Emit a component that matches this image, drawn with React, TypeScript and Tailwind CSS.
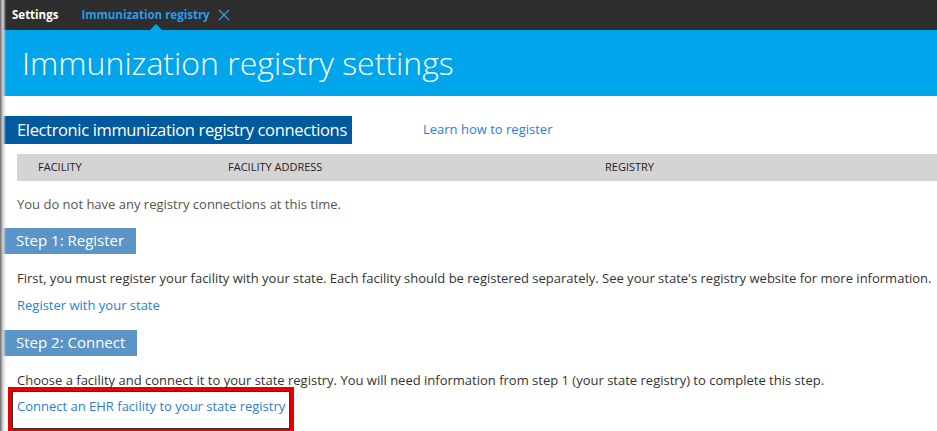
// Immunization registry settings page

import React from "react";

const font = { fontFamily: '"Open Sans", "Noto Sans", sans-serif' };

const StepHeader: React.FC<{ label: string }> = ({ label }) => (
  <div className="inline-flex h-[26px] items-center bg-[#5b94c6] pl-[16px] pr-[12px] text-[15px] text-white">
    {label}
  </div>
);

const App: React.FC = () => {
  return (
    <div className="relative h-[431px] w-[937px] overflow-hidden bg-white" style={font}>
      {/* left edge shadow */}
      <div className="absolute left-0 top-0 z-10 h-full w-[6px] bg-gradient-to-r from-[#6b6b6b] via-[#d8d8d8] to-transparent" />

      {/* Tabs */}
      <header className="flex h-[30px] items-center bg-[#2e2e2e] pl-[12px] text-[11.5px] font-bold">
        <span className="text-white">Settings</span>
        <div className="relative ml-[23px] flex h-full items-center">
          <span className="text-[#2d9be6]">Immunization registry</span>
          <svg className="ml-[8px]" width="12" height="12" viewBox="0 0 12 12">
            <path d="M1 1 L11 11 M11 1 L1 11" stroke="#2d9be6" strokeWidth="1.3" fill="none" />
          </svg>
          <div className="absolute bottom-0 left-[69px] h-0 w-0 border-x-[6px] border-b-[6px] border-x-transparent border-b-[#00a5ec]" />
        </div>
      </header>

      {/* Banner */}
      <div className="flex h-[66px] items-center bg-[#00a5ec] pl-[22px]">
        <h1 className="whitespace-nowrap text-[32px] font-light leading-none text-white">
          Immunization registry settings
        </h1>
      </div>

      <main className="pt-[20px]">
        <div className="flex items-center">
          <div className="flex h-[28px] w-[352px] items-center whitespace-nowrap bg-[#005a9e] pl-[17px] text-[16.5px] tracking-[-0.35px] text-white">
            Electronic immunization registry connections
          </div>
          <a href="#" className="ml-[71px] whitespace-nowrap text-[13px] text-[#2a7fd4]">
            Learn how to register
          </a>
        </div>

        <div className="ml-[17px] mt-[10px] flex h-[27px] items-center bg-[#d4d4d4] text-[11px] text-[#2a1a2a]">
          <span className="ml-[21px] w-[190px]">FACILITY</span>
          <span className="w-[377px]">FACILITY ADDRESS</span>
          <span>REGISTRY</span>
        </div>

        <p className="ml-[17px] mt-[14px] whitespace-nowrap text-[13px] text-[#555]">
          You do not have any registry connections at this time.
        </p>

        <div className="mt-[13px]">
          <StepHeader label="Step 1: Register" />
        </div>
        <p className="ml-[17px] mt-[15px] whitespace-nowrap text-[13px] text-[#333]">
          First, you must register your facility with your state. Each facility should be registered separately. See
          your state's registry website for more information.
        </p>
        <a href="#" className="ml-[17px] mt-[8px] block whitespace-nowrap text-[13px] text-[#2a7fd4]">
          Register with your state
        </a>

        <div className="mt-[14px]">
          <StepHeader label="Step 2: Connect" />
        </div>
        <p className="ml-[17px] mt-[15px] whitespace-nowrap text-[13px] text-[#333]">
          Choose a facility and connect it to your state registry. You will need information from step 1 (your state
          registry) to complete this step.
        </p>
        <div className="ml-[8px] mt-[-3px] w-[286px] border-[4px] border-[#e80000] px-[5px] pb-[12px] pt-[6px] outline outline-[1.5px] outline-offset-[-5px] outline-[#333]">
          <a href="#" className="block whitespace-nowrap text-[13px] text-[#2a7fd4]">
            Connect an EHR facility to your state registry
          </a>
        </div>
      </main>
    </div>
  );
};

export default App;
